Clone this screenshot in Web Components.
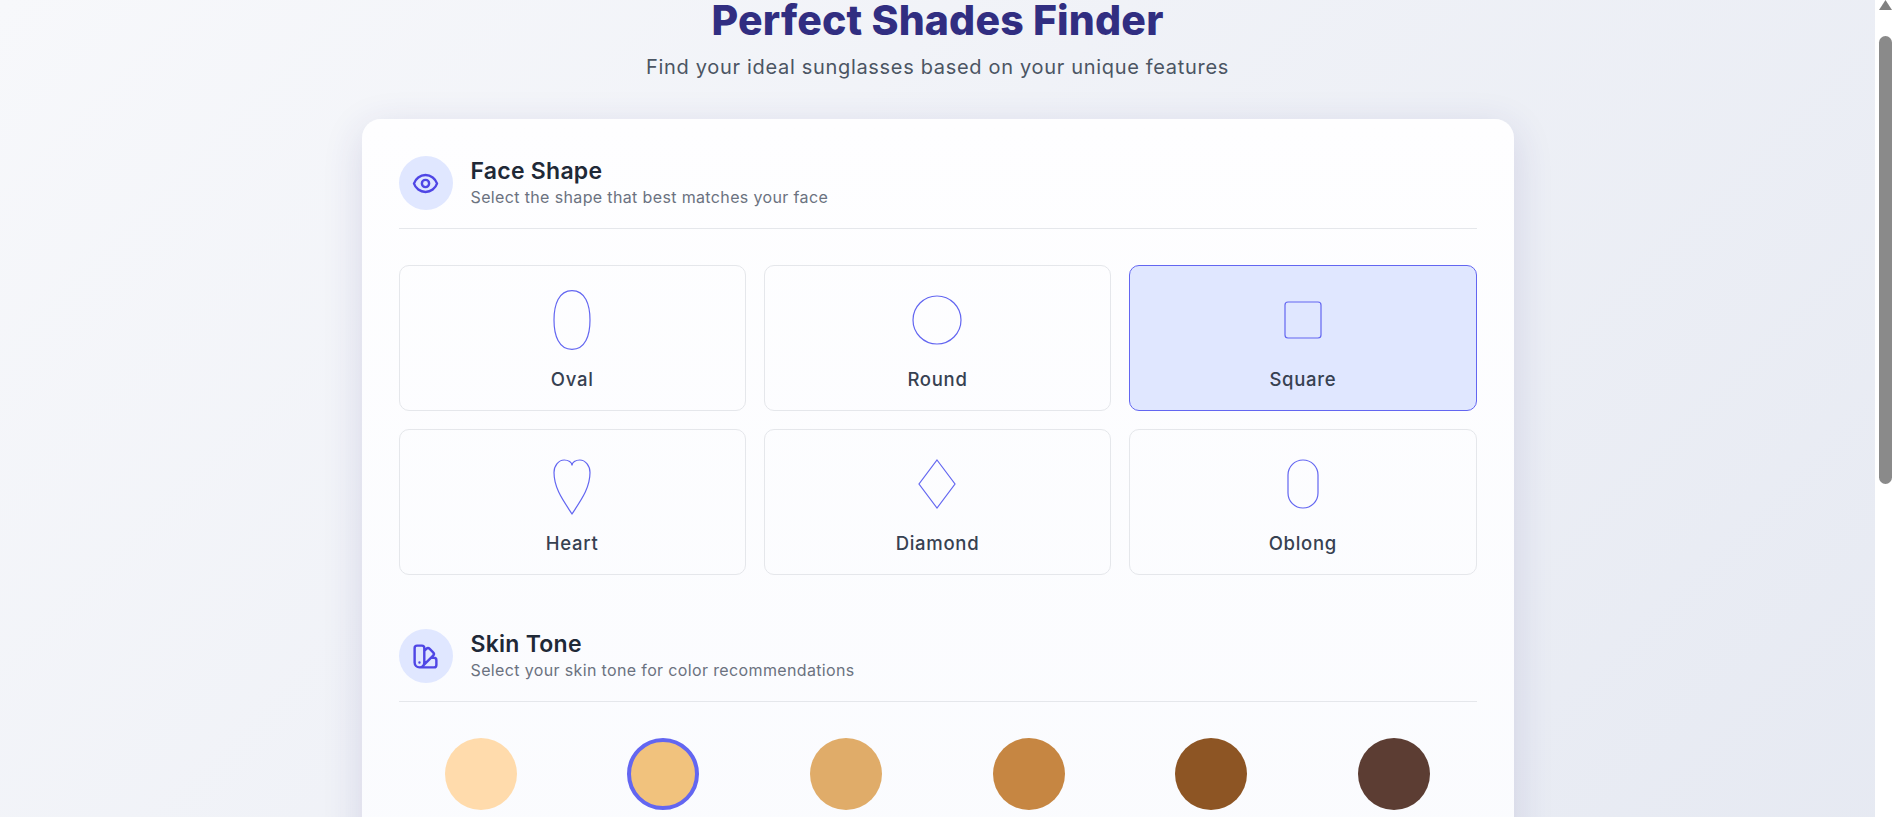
<!DOCTYPE html>
<html lang="en">
<head>
<meta charset="utf-8">
<title>Perfect Shades Finder</title>
<style>
  html, body { margin: 0; height: 100%; overflow: hidden; }
  body { font-family: "Inter", "Noto Sans", sans-serif; }
</style>
</head>
<body>
<shades-app>
  <shades-section title="Face Shape" desc="Select the shape that best matches your face" icon="eye">
    <div style="display:grid;grid-template-columns:repeat(3,1fr);gap:18px">
      <shape-option shape="oval" label="Oval"></shape-option>
      <shape-option shape="round" label="Round"></shape-option>
      <shape-option shape="square" label="Square" selected></shape-option>
      <shape-option shape="heart" label="Heart"></shape-option>
      <shape-option shape="diamond" label="Diamond"></shape-option>
      <shape-option shape="oblong" label="Oblong"></shape-option>
    </div>
  </shades-section>
  <shades-section title="Skin Tone" desc="Select your skin tone for color recommendations" icon="swatch">
    <div style="display:grid;grid-template-columns:repeat(6,1fr);gap:18px">
      <tone-swatch color="#ffdbac"></tone-swatch>
      <tone-swatch color="#f1c27d" selected></tone-swatch>
      <tone-swatch color="#e0ac69"></tone-swatch>
      <tone-swatch color="#c68642"></tone-swatch>
      <tone-swatch color="#8d5524"></tone-swatch>
      <tone-swatch color="#5c3d33"></tone-swatch>
    </div>
  </shades-section>
</shades-app>

<script>
// page frame: header, white card and the scrollbar column
class ShadesApp extends HTMLElement {
  constructor() {
    super();
    this.attachShadow({ mode: "open" });
    this.shadowRoot.innerHTML = `
    <style>
      :host { display: flex; height: 100vh; overflow: hidden; }
      main {
        flex: 1; min-width: 0; overflow: hidden;
        background: linear-gradient(135deg, #f7f8fb 0%, #e2e6f0 100%) no-repeat;
        background-size: 100% 1500px;
        background-color: #e2e6f0;
      }
      header { text-align: center; height: 119px; }
      h1 {
        margin: 0; font-size: 41px; line-height: 40px; font-weight: 800;
        color: #312e81; letter-spacing: 0.15px;
      }
      p { margin: 12px 0 0; font-size: 20px; line-height: 30px; color: #4b5563; letter-spacing: 0.68px; }
      .card {
        width: 1152px; margin: 0 auto; box-sizing: border-box; padding: 37px;
        background: linear-gradient(#fefeff, #fafbfe); border-radius: 19px;
        box-shadow: 0 10px 40px rgba(49, 46, 129, 0.14);
      }
    </style>
    <main>
      <header>
        <h1>Perfect Shades Finder</h1>
        <p>Find your ideal sunglasses based on your unique features</p>
      </header>
      <div class="card"><slot></slot></div>
    </main>
    <fake-scrollbar></fake-scrollbar>`;
  }
}

const ICONS = {
  eye: `<path d="M15 12a3 3 0 11-6 0 3 3 0 016 0z"/><path d="M2.458 12C3.732 7.943 7.523 5 12 5c4.478 0 8.268 2.943 9.542 7-1.274 4.057-5.064 7-9.542 7-4.477 0-8.268-2.943-9.542-7z"/>`,
  swatch: `<path d="M7 21a4 4 0 01-4-4V5a2 2 0 012-2h4a2 2 0 012 2v12a4 4 0 01-4 4zm0 0h12a2 2 0 002-2v-4a2 2 0 00-2-2h-2.343M11 7.343l1.657-1.657a2 2 0 012.828 0l2.829 2.829a2 2 0 010 2.828l-8.486 8.485M7 17h.01"/>`
};

class ShadesSection extends HTMLElement {
  constructor() {
    super();
    this.attachShadow({ mode: "open" });
  }
  connectedCallback() {
    this.shadowRoot.innerHTML = `
    <style>
      :host { display: block; margin-bottom: 54px; }
      .head {
        display: flex; align-items: center; gap: 18px;
        padding-bottom: 18px; margin-bottom: 36px; border-bottom: 1px solid #e5e7eb;
      }
      .icon {
        width: 54px; height: 54px; border-radius: 50%; background: #e0e7ff;
        display: flex; align-items: center; justify-content: center; flex: none;
      }
      svg { width: 29px; height: 29px; fill: none; stroke: #4f46e5; stroke-width: 2; stroke-linecap: round; stroke-linejoin: round; }
      h2 { margin: 0; font-size: 23px; line-height: 27px; font-weight: 600; color: #1f2937; letter-spacing: 0.25px; }
      span { display: block; margin-top: 1px; font-size: 16px; line-height: 22px; color: #6b7280; letter-spacing: 0.36px; }
    </style>
    <div class="head">
      <div class="icon"><svg viewBox="0 0 24 24">${ICONS[this.getAttribute("icon")]}</svg></div>
      <div>
        <h2>${this.getAttribute("title")}</h2>
        <span>${this.getAttribute("desc")}</span>
      </div>
    </div>
    <slot></slot>`;
  }
}

const SHAPES = {
  oval: `<path d="M50 1C72 1 80 24 80 50C80 76 72 99 50 99C28 99 20 76 20 50C20 24 28 1 50 1Z"/>`,
  round: `<circle cx="50" cy="50" r="40"/>`,
  square: `<rect x="20" y="20" width="60" height="60" rx="5"/>`,
  heart: `<path d="M50 100C35 77 20 57 20 31C20 19 28 10 37 10C44 10 50 14 50 19C50 14 56 10 63 10C72 10 80 19 80 31C80 57 65 77 50 100Z"/>`,
  diamond: `<path d="M50 10L80 50L50 90L20 50Z"/>`,
  oblong: `<rect x="25" y="10" width="50" height="80" rx="25"/>`
};

class ShapeOption extends HTMLElement {
  constructor() {
    super();
    this.attachShadow({ mode: "open" });
  }
  connectedCallback() {
    this.shadowRoot.innerHTML = `
    <style>
      :host {
        display: flex; flex-direction: column; align-items: center;
        box-sizing: border-box; height: 146px; padding-top: 24px;
        border: 1px solid #e5e7eb; border-radius: 10px;
      }
      :host([selected]) { background: #e0e7ff; border-color: #6366f1; }
      svg { width: 60px; height: 60px; fill: none; stroke: #6366f1; stroke-width: 2; flex: none; overflow: visible; }
      div { margin-top: 16px; font-size: 18.5px; line-height: 27px; font-weight: 500; color: #374151; letter-spacing: 0.7px; }
    </style>
    <svg viewBox="0 0 100 100">${SHAPES[this.getAttribute("shape")]}</svg>
    <div>${this.getAttribute("label")}</div>`;
  }
}

class ToneSwatch extends HTMLElement {
  constructor() {
    super();
    this.attachShadow({ mode: "open" });
  }
  connectedCallback() {
    this.shadowRoot.innerHTML = `
    <style>
      :host { display: flex; justify-content: center; }
      div { width: 72px; height: 72px; box-sizing: border-box; border-radius: 50%; background: ${this.getAttribute("color")}; }
      :host([selected]) div { border: 4px solid #6366f1; }
    </style>
    <div></div>`;
  }
}

// the browser scrollbar as it stood in the shot, scrolled slightly down
class FakeScrollbar extends HTMLElement {
  constructor() {
    super();
    this.attachShadow({ mode: "open" });
    this.shadowRoot.innerHTML = `
    <style>
      :host { display: flex; flex-direction: column; align-items: center; flex: none; width: 21px; background: #fff; }
      svg { width: 13px; height: 10px; fill: #808080; flex: none; }
      div { width: 13px; height: 448px; margin-top: 26px; border-radius: 6.5px; background: #8a8a8a; }
    </style>
    <svg viewBox="0 0 13 10"><path d="M6.5 0L13 10H0Z"/></svg>
    <div></div>`;
  }
}

customElements.define("shades-app", ShadesApp);
customElements.define("shades-section", ShadesSection);
customElements.define("shape-option", ShapeOption);
customElements.define("tone-swatch", ToneSwatch);
customElements.define("fake-scrollbar", FakeScrollbar);
</script>
</body>
</html>
